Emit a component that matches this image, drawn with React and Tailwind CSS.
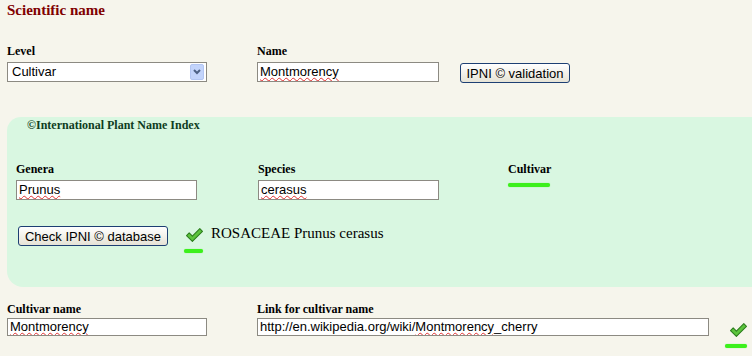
import React from 'react';

const serif = "font-['Liberation_Serif',serif]";
const sans = "font-['Liberation_Sans',Arial,sans-serif]";

function Check({ className = '' }) {
  return (
    <svg className={className} width="17" height="14" viewBox="0 0 16 13">
      <polygon points="0.5,7 3,4.5 6,7.5 13,0.5 15.5,3 6,12.5" fill="#5cc43c" stroke="#2b7d1c" strokeWidth="1" strokeLinejoin="round" />
    </svg>
  );
}

function Mark({ className = '' }) {
  return <div className={`h-[4px] rounded-full bg-[#3cf01c] shadow-[0_0_1px_#6cf050] ${className}`}></div>;
}

function Label({ children, className = '' }) {
  return <div className={`h-[14px] leading-[14px] text-[12px] font-bold text-black ${serif} ${className}`}>{children}</div>;
}

function Field({ width, height = 20, children }) {
  return (
    <div
      className={`border border-[#8c8a82] bg-white pl-[2px] text-[13px] leading-[15px] text-black whitespace-nowrap overflow-hidden flex items-center ${sans}`}
      style={{ width, height }}
    >
      <span className="-mt-[1px]">{children}</span>
    </div>
  );
}

function Spell({ children }) {
  return <span className="underline decoration-wavy decoration-[#e03030] decoration-1 underline-offset-[1px]">{children}</span>;
}

function Button({ children, width }) {
  return (
    <button
      className={`h-[20px] rounded-[3px] border border-[#1d3f73] bg-gradient-to-b from-white to-[#e6e3d6] text-[13px] text-black leading-none ${sans}`}
      style={{ width }}
    >
      {children}
    </button>
  );
}

export default function App() {
  return (
    <div className="w-[752px] h-[356px] overflow-hidden bg-[#f6f5ec] pl-[7px]">
      <h1 className={`h-[20px] leading-[20px] text-[15px] font-bold text-[#800000] ${serif}`}>Scientific name</h1>

      <div className="mt-[24px] flex items-start">
        <div className="w-[250px]">
          <Label>Level</Label>
          <div className={`mt-[4px] w-[200px] h-[20px] border border-[#8c8a82] bg-white flex items-center justify-between pl-[4px] pr-[2px] text-[13px] ${sans}`}>
            <span>Cultivar</span>
            <div className="w-[14px] h-[16px] rounded-[2px] bg-[#c3d4fb] border border-[#b3c6f3] flex items-center justify-center">
              <svg width="8" height="6" viewBox="0 0 8 6">
                <path d="M1 1 L4 4 L7 1" fill="none" stroke="#4d6185" strokeWidth="2" />
              </svg>
            </div>
          </div>
        </div>
        <div className="w-[203px]">
          <Label>Name</Label>
          <div className="mt-[4px]">
            <Field width={182}><Spell>Montmorency</Spell></Field>
          </div>
        </div>
        <div className="mt-[19px] flex">
          <Button width={110}>IPNI © validation</Button>
        </div>
      </div>

      <div className="mt-[34px] h-[170px] bg-[#d9f7e1] rounded-tl-[14px] rounded-bl-[16px] pl-[9px] pt-[1px]">
        <div className={`ml-[11px] h-[14px] leading-[14px] text-[12px] font-bold text-[#0e3d22] ${serif}`}>©International Plant Name Index</div>

        <div className="mt-[30px] flex items-start">
          <div className="w-[242px]">
            <Label>Genera</Label>
            <div className="mt-[4px]">
              <Field width={181}><Spell>Prunus</Spell></Field>
            </div>
          </div>
          <div className="w-[250px]">
            <Label>Species</Label>
            <div className="mt-[4px]">
              <Field width={181}><Spell>cerasus</Spell></Field>
            </div>
          </div>
          <div>
            <Label>Cultivar</Label>
            <Mark className="mt-[7px] w-[42px]" />
          </div>
        </div>

        <div className="mt-[26px] ml-[2px] flex items-start">
          <Button width={150}>Check IPNI © database</Button>
          <div className="ml-[16px] mt-[2px] flex flex-col items-end w-[19px]">
            <Check />
            <Mark className="mt-[7px] w-[19px]" />
          </div>
          <div className={`ml-[8px] text-[15px] leading-[14px] text-black ${serif}`}>ROSACEAE Prunus cerasus</div>
        </div>
      </div>

      <div className="mt-[15px] flex items-start">
        <div className="w-[250px]">
          <Label>Cultivar name</Label>
          <div className="mt-[2px]">
            <Field width={200} height={18}><Spell>Montmorency</Spell></Field>
          </div>
        </div>
        <div>
          <Label>Link for cultivar name</Label>
          <div className="mt-[2px]">
            <Field width={452} height={18}>
              http://en.wikipedia.org/wiki/<Spell>Montmorency</Spell>_cherry
            </Field>
          </div>
        </div>
        <div className="ml-[16px] mt-[21px] flex flex-col items-end w-[22px]">
          <Check />
          <Mark className="mt-[7px] w-[22px]" />
        </div>
      </div>
    </div>
  );
}
